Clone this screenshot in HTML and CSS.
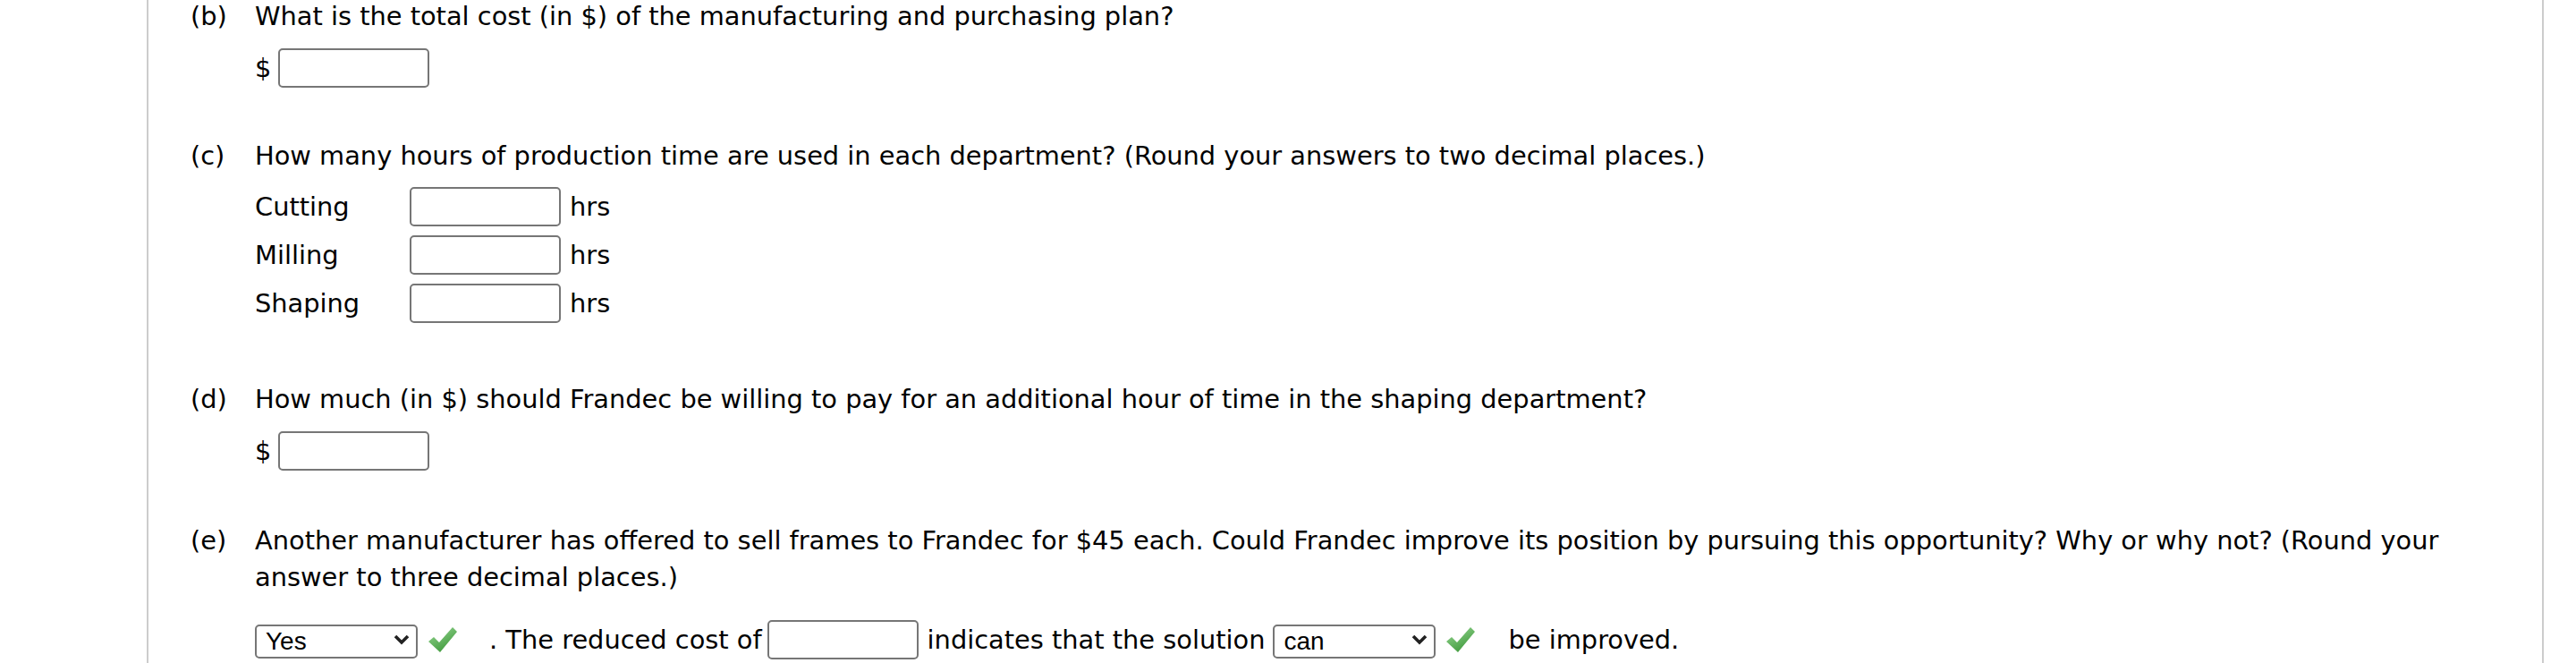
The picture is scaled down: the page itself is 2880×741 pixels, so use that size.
FILE: index.html
```html
<!DOCTYPE html>
<html lang="en">
<head>
<meta charset="utf-8">
<title>Frandec</title>
<link rel="stylesheet" href="styles.css">
</head>
<body>
<div class="page">
  <section class="part part-b">
    <div class="label">(b)</div>
    <div class="body">
      <p class="q">What is the total cost (in $) of the manufacturing and purchasing plan?</p>
      <div class="answer first"><span class="cur">$</span><input class="box" type="text"></div>
    </div>
  </section>

  <section class="part part-c">
    <div class="label">(c)</div>
    <div class="body">
      <p class="q">How many hours of production time are used in each department? (Round your answers to two decimal places.)</p>
      <div class="answer first"><span class="dept">Cutting</span><input class="box" type="text"><span class="unit">hrs</span></div>
      <div class="answer"><span class="dept">Milling</span><input class="box" type="text"><span class="unit">hrs</span></div>
      <div class="answer"><span class="dept">Shaping</span><input class="box" type="text"><span class="unit">hrs</span></div>
    </div>
  </section>

  <section class="part part-d">
    <div class="label">(d)</div>
    <div class="body">
      <p class="q">How much (in $) should Frandec be willing to pay for an additional hour of time in the shaping department?</p>
      <div class="answer first"><span class="cur">$</span><input class="box" type="text"></div>
    </div>
  </section>

  <section class="part part-e">
    <div class="label">(e)</div>
    <div class="body">
      <p class="q">Another manufacturer has offered to sell frames to Frandec for $45 each. Could Frandec improve its position by pursuing this opportunity? Why or why not? (Round your answer to three decimal places.)</p>
      <div class="answer sentence">
        <span class="sel-wrap">
          <select class="sel"><option>Yes</option><option>No</option></select>
          <svg class="chev" width="18" height="12" viewBox="0 0 18 12"><path d="M2 2 L9 9 L16 2" fill="none" stroke="#222" stroke-width="3.6"/></svg>
        </span>
        <svg class="check" width="34" height="30" viewBox="0 0 34 30">
          <defs><linearGradient id="g1" x1="0" y1="0" x2="0.6" y2="1"><stop offset="0" stop-color="#9ad895"/><stop offset="1" stop-color="#3f9a3c"/></linearGradient></defs>
          <path d="M1 17 L7 12 L13 18 L28 1 L33 6 L14 29 Z" fill="url(#g1)"/>
        </svg>
        <span class="t t1">. The reduced cost of</span>
        <input class="box" type="text">
        <span class="t t2">indicates that the solution</span>
        <span class="sel-wrap">
          <select class="sel"><option>can</option><option>cannot</option></select>
          <svg class="chev" width="18" height="12" viewBox="0 0 18 12"><path d="M2 2 L9 9 L16 2" fill="none" stroke="#222" stroke-width="3.6"/></svg>
        </span>
        <svg class="check" width="34" height="30" viewBox="0 0 34 30">
          <defs><linearGradient id="g2" x1="0" y1="0" x2="0.6" y2="1"><stop offset="0" stop-color="#9ad895"/><stop offset="1" stop-color="#3f9a3c"/></linearGradient></defs>
          <path d="M1 17 L7 12 L13 18 L28 1 L33 6 L14 29 Z" fill="url(#g2)"/>
        </svg>
        <span class="t t3">be improved.</span>
      </div>
    </div>
  </section>
</div>
</body>
</html>
```

FILE: styles.css
```css
html, body {
  margin: 0;
  padding: 0;
  background: #fff;
}
body {
  font-family: "DejaVu Sans", Verdana, sans-serif;
  font-size: 28.85px;
  line-height: 41px;
  color: #000;
}
.page {
  margin-left: 164px;
  width: 2680px;
  height: 741px;
  box-sizing: border-box;
  border-left: 2px solid #cccccc;
  border-right: 2px solid #cccccc;
  padding-left: 47px;
  padding-right: 50px;
  overflow: hidden;
}
.part {
  display: flex;
}
.label {
  flex: none;
  width: 72px;
}
.body {
  flex: 1;
}
.q {
  margin: 0;
}
.part-b { margin-top: -2px; }
.part-c { margin-top: 56px; }
.part-d { margin-top: 65px; }
.part-e { margin-top: 58px; }

.answer {
  display: flex;
  align-items: center;
  height: 44px;
  margin-top: 10px;
}
.answer.first { margin-top: 15px; }
.part-c .answer.first { margin-top: 14px; }
.part-e .answer.sentence { margin-top: 27px; }

.box {
  flex: none;
  width: 169px;
  height: 44px;
  box-sizing: border-box;
  margin: 0;
  padding: 0 8px;
  border: 2px solid #767676;
  border-radius: 5px;
  background: #fff;
  font: inherit;
}
.cur { margin-right: 8px; }
.dept {
  flex: none;
  width: 173px;
}
.unit { margin-left: 10px; }

.sel-wrap {
  position: relative;
  flex: none;
  display: inline-block;
  width: 182px;
  height: 38px;
}
.sel {
  -webkit-appearance: none;
  appearance: none;
  width: 182px;
  height: 38px;
  box-sizing: border-box;
  margin: 0;
  padding: 0 0 0 10px;
  border: 2px solid #767676;
  border-radius: 5px;
  background: #fff;
  color: #000;
  font-family: "Liberation Sans", Arial, sans-serif;
  font-size: 28px;
  line-height: 34px;
}
.chev {
  position: absolute;
  right: 9px;
  top: 13px;
  pointer-events: none;
}
.check {
  flex: none;
  margin-left: 11px;
}
.t1 { margin-left: 35px; margin-right: 6px; }
.t2 { margin-left: 10px; margin-right: 9px; }
.t3 { margin-left: 36px; }
```
